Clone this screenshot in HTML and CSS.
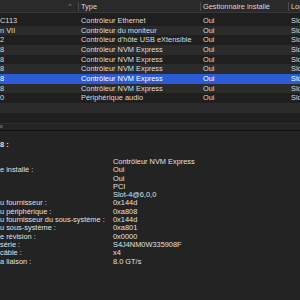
FILE: index.html
```html
<!DOCTYPE html>
<html>
<head>
<meta charset="utf-8">
<link rel="stylesheet" href="styles.css">
</head>
<body>
<div class="list">
  <div class="header">
    <div class="hcell c1"><span class="sort">&#8963;</span></div>
    <div class="hcell c2">Type</div>
    <div class="hcell c3">Gestionnaire installé</div>
    <div class="hcell c4">Log</div>
  </div>
  <div class="rows">
    <div class="row"><div class="c1">C113</div><div class="c2">Contrôleur Ethernet</div><div class="c3">Oui</div><div class="c4">Slo</div></div>
    <div class="row"><div class="c1">n VII</div><div class="c2">Contrôleur du moniteur</div><div class="c3">Oui</div><div class="c4">Slo</div></div>
    <div class="row"><div class="c1">2</div><div class="c2">Contrôleur d’hôte USB eXtensible</div><div class="c3">Oui</div><div class="c4">Slo</div></div>
    <div class="row"><div class="c1">8</div><div class="c2">Contrôleur NVM Express</div><div class="c3">Oui</div><div class="c4">Slo</div></div>
    <div class="row"><div class="c1">8</div><div class="c2">Contrôleur NVM Express</div><div class="c3">Oui</div><div class="c4">Slo</div></div>
    <div class="row"><div class="c1">8</div><div class="c2">Contrôleur NVM Express</div><div class="c3">Oui</div><div class="c4">Slo</div></div>
    <div class="row sel"><div class="c1">8</div><div class="c2">Contrôleur NVM Express</div><div class="c3">Oui</div><div class="c4">Slo</div></div>
    <div class="row"><div class="c1">8</div><div class="c2">Contrôleur NVM Express</div><div class="c3">Oui</div><div class="c4">Slo</div></div>
    <div class="row"><div class="c1">0</div><div class="c2">Périphérique audio</div><div class="c3">Oui</div><div class="c4">Slo</div></div>
    <div class="row"></div>
    <div class="row"></div>
  </div>
  <div class="scrollbar"><div class="thumb"></div></div>
</div>
<div class="detail">
  <div class="title">8 :</div>
  <div class="props">
    <div class="k"></div><div class="v">Contrôleur NVM Express</div>
    <div class="k">e installé :</div><div class="v">Oui</div>
    <div class="k"></div><div class="v">Oui</div>
    <div class="k"></div><div class="v">PCI</div>
    <div class="k"></div><div class="v">Slot-4@6,0,0</div>
    <div class="k">u fournisseur :</div><div class="v">0x144d</div>
    <div class="k">u périphérique :</div><div class="v">0xa808</div>
    <div class="k">u fournisseur du sous-système :</div><div class="v">0x144d</div>
    <div class="k">u sous-système :</div><div class="v">0xa801</div>
    <div class="k">e révision :</div><div class="v">0x0000</div>
    <div class="k">série :</div><div class="v">S4J4NM0W335908F</div>
    <div class="k">câble :</div><div class="v">x4</div>
    <div class="k">a liaison :</div><div class="v">8.0 GT/s</div>
  </div>
</div>
</body>
</html>
```
FILE: styles.css
```css
html, body {
  margin: 0;
  padding: 0;
}
body {
  width: 300px;
  height: 300px;
  overflow: hidden;
  background: #232323;
  font-family: "Liberation Sans", Arial, sans-serif;
  font-size: 7.4px;
  color: #dcdcdc;
}
.list {
  background: #1f1f1f;
  height: 130px;
  display: flex;
  flex-direction: column;
  overflow: hidden;
}
.header {
  display: grid;
  grid-template-columns: 78px 122px 88px 1fr;
  height: 12px;
  background: #2a2a2a;
  border-bottom: 1px solid #383838;
  align-items: center;
  color: #d6d6d6;
}
.hcell {
  height: 9px;
  line-height: 9px;
  padding-left: 2px;
  white-space: nowrap;
  overflow: hidden;
}
.hcell.c2, .hcell.c3, .hcell.c4 {
  border-left: 1px solid #4a4a4a;
}
.hcell.c1 {
  text-align: right;
  padding-right: 5px;
  color: #8a8a8a;
}
.sort {
  font-size: 7px;
}
.rows {
  padding-top: 3px;
}
.row {
  display: grid;
  grid-template-columns: 78px 122px 88px 1fr;
  height: 9.67px;
  line-height: 9.67px;
  white-space: nowrap;
}
.row:nth-child(even) {
  background: #2b2b2b;
}
.row.sel {
  background: #2c5bd6;
  color: #ffffff;
}
.row > div {
  overflow: hidden;
}
.row .c2, .row .c3, .row .c4 {
  padding-left: 3px;
}
.scrollbar {
  height: 6px;
  margin-top: auto;
  background: #242424;
  border-top: 1px solid #2e2e2e;
}
.thumb {
  width: 3px;
  height: 3px;
  margin-top: 1px;
  border-radius: 0 2px 2px 0;
  background: #555;
}
.detail {
  border-top: 1px solid #111;
  padding-top: 9px;
  color: #e0e0e0;
}
.title {
  font-weight: 700;
  line-height: 9px;
  height: 9px;
}
.props {
  margin-top: 9px;
  display: grid;
  grid-template-columns: 113px 1fr;
  grid-auto-rows: 8.3px;
  line-height: 8.3px;
  white-space: nowrap;
}
.k {
  overflow: hidden;
}
```
